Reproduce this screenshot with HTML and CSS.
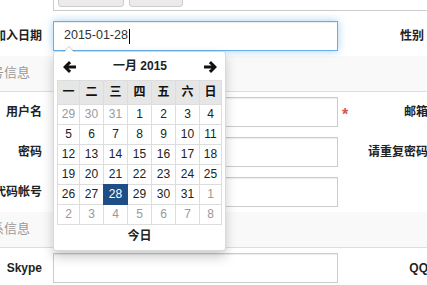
FILE: index.html
```html
<!DOCTYPE html>
<html lang="zh-CN">
<head>
<meta charset="utf-8">
<title>表单</title>
<link rel="stylesheet" href="styles.css">
</head>
<body>
<div class="page">
  <div class="row">
    <div class="lbl">状态</div>
    <div class="btnbox">
      <span class="btn">启用账户</span>
      <span class="btn">未激活</span>
    </div>
  </div>

  <div class="row">
    <div class="lbl">加入日期</div>
    <div class="field">
      <div class="input input--focus">2015-01-28<span class="caret"></span></div>
      <div class="dp">
        <div class="dp-nav">
          <svg class="dp-arrow" width="13" height="12" viewBox="0 0 13 12"><path d="M0 6 L6 0 L8.2 2.2 L5.4 4.5 L13 4.5 L13 7.5 L5.4 7.5 L8.2 9.8 L6 12 Z" fill="#111"/></svg>
          <span class="dp-title">一月 2015</span>
          <svg class="dp-arrow" width="13" height="12" viewBox="0 0 13 12"><path d="M13 6 L7 0 L4.8 2.2 L7.6 4.5 L0 4.5 L0 7.5 L7.6 7.5 L4.8 9.8 L7 12 Z" fill="#111"/></svg>
        </div>
        <div class="dp-grid">
          <span class="dp-h">一</span><span class="dp-h">二</span><span class="dp-h">三</span><span class="dp-h">四</span><span class="dp-h">五</span><span class="dp-h">六</span><span class="dp-h">日</span>
          <span class="dp-d dp-d--muted">29</span><span class="dp-d dp-d--muted">30</span><span class="dp-d dp-d--muted">31</span><span class="dp-d">1</span><span class="dp-d">2</span><span class="dp-d">3</span><span class="dp-d">4</span>
          <span class="dp-d">5</span><span class="dp-d">6</span><span class="dp-d">7</span><span class="dp-d">8</span><span class="dp-d">9</span><span class="dp-d">10</span><span class="dp-d">11</span>
          <span class="dp-d">12</span><span class="dp-d">13</span><span class="dp-d">14</span><span class="dp-d">15</span><span class="dp-d">16</span><span class="dp-d">17</span><span class="dp-d">18</span>
          <span class="dp-d">19</span><span class="dp-d">20</span><span class="dp-d">21</span><span class="dp-d">22</span><span class="dp-d">23</span><span class="dp-d">24</span><span class="dp-d">25</span>
          <span class="dp-d">26</span><span class="dp-d">27</span><span class="dp-d dp-d--active">28</span><span class="dp-d">29</span><span class="dp-d">30</span><span class="dp-d">31</span><span class="dp-d dp-d--muted">1</span>
          <span class="dp-d dp-d--muted">2</span><span class="dp-d dp-d--muted">3</span><span class="dp-d dp-d--muted">4</span><span class="dp-d dp-d--muted">5</span><span class="dp-d dp-d--muted">6</span><span class="dp-d dp-d--muted">7</span><span class="dp-d dp-d--muted">8</span>
        </div>
        <div class="dp-today">今日</div>
      </div>
    </div>
    <div class="req"></div>
    <div class="rlbl rlbl--inset">性别</div>
  </div>

  <div class="band"><span class="band-text">账号信息</span></div>

  <div class="row">
    <div class="lbl">用户名</div>
    <div class="field"><div class="input"></div></div>
    <div class="req">*</div>
    <div class="rlbl">邮箱</div>
  </div>

  <div class="row">
    <div class="lbl">密码</div>
    <div class="field"><div class="input"></div></div>
    <div class="req"></div>
    <div class="rlbl">请重复密码</div>
  </div>

  <div class="row">
    <div class="lbl">托管代码帐号</div>
    <div class="field"><div class="input"></div></div>
    <div class="req"></div>
    <div class="rlbl"></div>
  </div>

  <div class="band"><span class="band-text">联系信息</span></div>

  <div class="row">
    <div class="lbl">Skype</div>
    <div class="field"><div class="input"></div></div>
    <div class="req"></div>
    <div class="rlbl">QQ</div>
  </div>
</div>
</body>
</html>
```

FILE: styles.css
```css
html, body {
  margin: 0;
  padding: 0;
  overflow: hidden;
  background: #fff;
}

body {
  width: 427px;
  height: 285px;
  font-family: "Liberation Sans", "Noto Sans CJK SC", sans-serif;
  font-size: 12px;
  line-height: 1.4;
  color: #222;
}

.page {
  width: 700px;
  margin-top: -25px;
}

.row {
  display: flex;
  align-items: center;
  padding: 5px 0;
}

.lbl {
  width: 42px;
  margin-right: 11px;
  flex: none;
  display: flex;
  justify-content: flex-end;
  white-space: nowrap;
  font-weight: 700;
}

.btnbox {
  flex: 1;
  display: flex;
  gap: 5px;
  padding: 3px 4px;
  border-left: 1px solid #ccc;
  border-bottom: 1px solid #ccc;
}

.btn {
  height: 24px;
  box-sizing: border-box;
  padding: 0 8px;
  display: flex;
  align-items: center;
  border: 1px solid #ccc;
  border-radius: 3px;
  background: #ebebeb;
  color: #333;
}

.field {
  width: 285px;
  flex: none;
  position: relative;
}

.input {
  height: 30px;
  box-sizing: border-box;
  padding: 0 10px;
  display: flex;
  align-items: center;
  border: 1px solid #ccc;
  background: #fff;
  box-shadow: inset 0 1px 1px rgba(0, 0, 0, 0.075);
  font-size: 12.5px;
  color: #333;
}

.input--focus {
  border-color: #66afe9;
  box-shadow: inset 0 1px 1px rgba(0, 0, 0, 0.075), 0 0 8px rgba(102, 175, 233, 0.6);
}

.caret {
  width: 1px;
  height: 15px;
  margin-left: 1px;
  background: #000;
}

.req {
  width: 20px;
  flex: none;
  box-sizing: border-box;
  padding: 7px 0 0 4px;
  color: #d9534f;
  font-size: 16px;
  font-weight: 700;
  line-height: 1.4;
}

.rlbl {
  width: 70px;
  flex: none;
  text-align: right;
  white-space: nowrap;
  font-weight: 700;
}

.rlbl--inset {
  padding-right: 4px;
  box-sizing: border-box;
}

.band {
  height: 36px;
  box-sizing: border-box;
  display: flex;
  align-items: center;
  background: #f9f9f9;
  border-bottom: 1px solid #ddd;
}

.band-text {
  margin-left: -22px;
  font-size: 13px;
  color: #999;
  white-space: nowrap;
}

/* date picker */
.dp {
  position: absolute;
  top: 100%;
  left: 0;
  z-index: 10;
  width: 173px;
  box-sizing: border-box;
  padding: 4px 3px 3px;
  background: #fff;
  border: 1px solid rgba(0, 0, 0, 0.15);
  border-radius: 3px;
  box-shadow: 0 6px 12px rgba(0, 0, 0, 0.2);
}

.dp::before {
  content: "";
  position: absolute;
  top: -6px;
  left: 9px;
  border: 6px solid transparent;
  border-top: 0;
  border-bottom-color: rgba(0, 0, 0, 0.2);
}

.dp::after {
  content: "";
  position: absolute;
  top: -5px;
  left: 10px;
  border: 5px solid transparent;
  border-top: 0;
  border-bottom-color: #fff;
}

.dp-nav {
  height: 21px;
  margin-bottom: 3px;
  padding: 0 5px 0 6px;
  display: flex;
  align-items: center;
  justify-content: space-between;
}

.dp-arrow {
  display: block;
}

.dp-title {
  font-weight: 700;
}

.dp-grid {
  display: grid;
  grid-template-columns: 21px repeat(5, 23px) 21px;
  grid-template-rows: 23px;
  grid-auto-rows: 19px;
  gap: 1px;
  padding: 1px;
  background: #ddd;
}

.dp-h,
.dp-d {
  display: flex;
  align-items: center;
  justify-content: center;
}

.dp-h {
  background: #e6e6e6;
  font-weight: 700;
  color: #111;
}

.dp-d {
  background: #fff;
  color: #222;
}

.dp-d--muted {
  color: #999;
}

.dp-d--active {
  background: #1f4e86;
  outline: 1px solid #1f4e86;
  color: #fff;
}

.dp-today {
  height: 22px;
  display: flex;
  align-items: center;
  justify-content: center;
  font-weight: 700;
}
```
